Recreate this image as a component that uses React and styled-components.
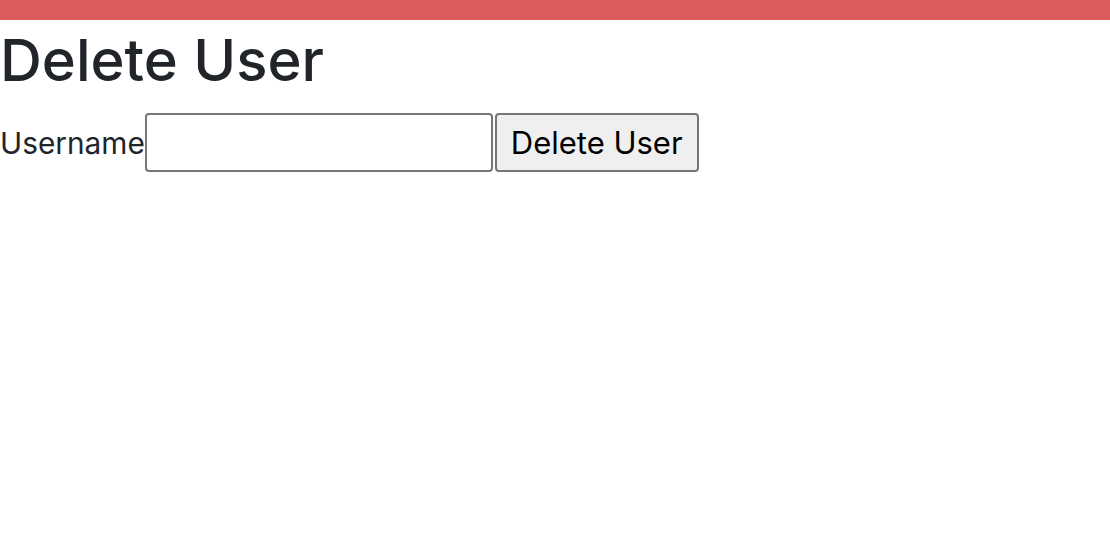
import React from "react";
import styled, { createGlobalStyle } from "styled-components";

const GlobalStyle = createGlobalStyle`
  html, body { margin: 0; padding: 0; background: #fff; }
  body { font-family: Inter, "Liberation Sans", Arial, sans-serif; color: #212529; }
`;

const TopBar = styled.div`
  height: 20px;
  background: #d95c5b;
`;

const Title = styled.h1`
  margin: 4px 0 0;
  font-size: 58px;
  line-height: 72px;
  font-weight: 500;
  color: #212529;
`;

const Form = styled.form`
  display: flex;
  align-items: center;
  margin-top: 17px;
`;

const Label = styled.label`
  font-size: 29.8px;
  line-height: 40px;
  color: #212529;
`;

const Input = styled.input`
  box-sizing: border-box;
  width: 348px;
  height: 59px;
  margin: 0;
  padding: 2px 6px;
  border: 2px solid #767676;
  border-radius: 4px;
  background: #fff;
  font-size: 30px;
  font-family: inherit;
  outline: none;
`;

const Button = styled.button`
  box-sizing: border-box;
  height: 59px;
  margin: 0 0 0 2px;
  padding: 0 14px;
  border: 2px solid #767676;
  border-radius: 4px;
  background: #efefef;
  color: #000;
  font-size: 31px;
  font-family: inherit;
  cursor: pointer;
`;

export default function App() {
  return (
    <>
      <GlobalStyle />
      <TopBar />
      <Title>Delete User</Title>
      <Form onSubmit={(e) => e.preventDefault()}>
        <Label htmlFor="username">Username</Label>
        <Input id="username" type="text" />
        <Button type="submit">Delete User</Button>
      </Form>
    </>
  );
}
